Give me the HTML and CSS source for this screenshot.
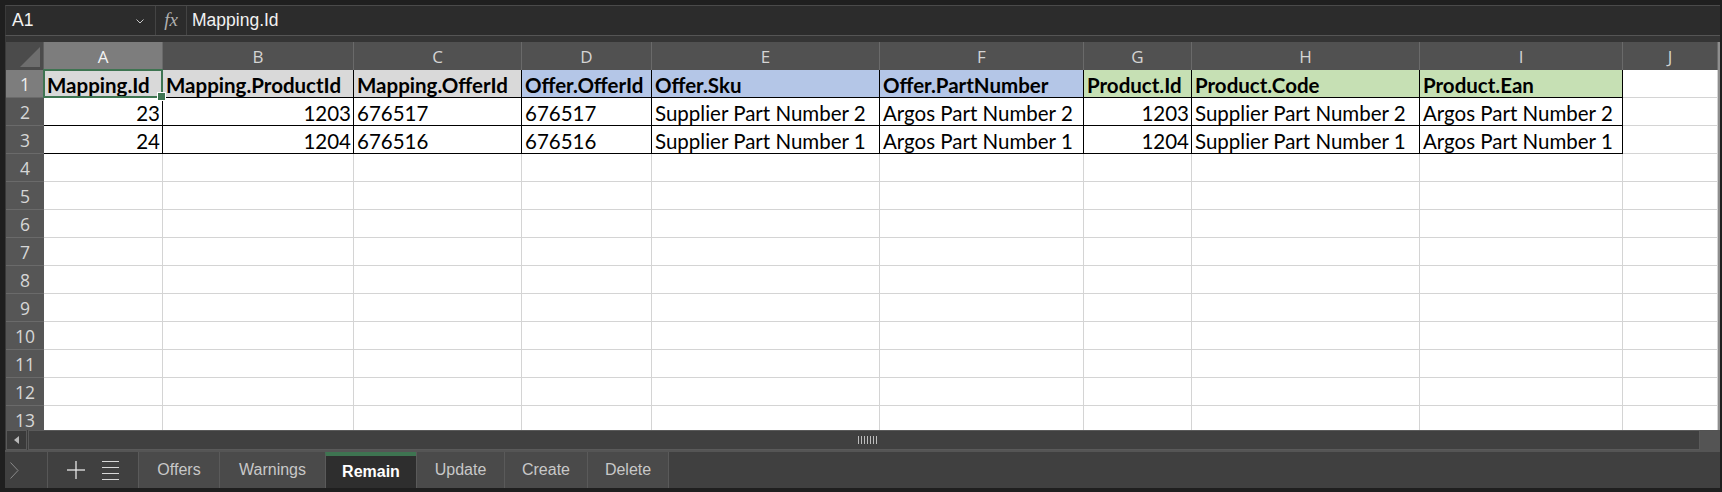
FILE: index.html
```html
<!DOCTYPE html>
<html>
<head>
<meta charset="utf-8">
<link rel="stylesheet" href="styles.css">
</head>
<body>
<div class="app">
  <div class="formula-bar">
    <div class="namebox">
      <span class="name">A1</span>
      <svg class="chev" width="8" height="5" viewBox="0 0 8 5"><polyline points="0.5,0.5 4,4 7.5,0.5" fill="none" stroke="#c8c8c8" stroke-width="1"/></svg>
    </div>
    <div class="fx">fx</div>
    <div class="formula">Mapping.Id</div>
  </div>
  <div class="band"></div>
  <div class="sheet">
    <div class="grid">
      <div class="corner"><div class="tri"></div></div>
      <div class="ch sel">A</div><div class="ch">B</div><div class="ch">C</div><div class="ch">D</div><div class="ch">E</div><div class="ch">F</div><div class="ch">G</div><div class="ch">H</div><div class="ch">I</div><div class="ch">J</div>

      <div class="rh sel">1</div>
      <div class="c k bold gray active">Mapping.Id</div>
      <div class="c k bold gray">Mapping.ProductId</div>
      <div class="c k bold gray">Mapping.OfferId</div>
      <div class="c k bold blue">Offer.OfferId</div>
      <div class="c k bold blue">Offer.Sku</div>
      <div class="c k bold blue">Offer.PartNumber</div>
      <div class="c k bold green">Product.Id</div>
      <div class="c k bold green">Product.Code</div>
      <div class="c k bold green">Product.Ean</div>
      <div class="c"></div>

      <div class="rh">2</div>
      <div class="c k r">23</div>
      <div class="c k r">1203</div>
      <div class="c k">676517</div>
      <div class="c k">676517</div>
      <div class="c k">Supplier Part Number 2</div>
      <div class="c k">Argos Part Number 2</div>
      <div class="c k r">1203</div>
      <div class="c k">Supplier Part Number 2</div>
      <div class="c k">Argos Part Number 2</div>
      <div class="c"></div>

      <div class="rh">3</div>
      <div class="c k r">24</div>
      <div class="c k r">1204</div>
      <div class="c k">676516</div>
      <div class="c k">676516</div>
      <div class="c k">Supplier Part Number 1</div>
      <div class="c k">Argos Part Number 1</div>
      <div class="c k r">1204</div>
      <div class="c k">Supplier Part Number 1</div>
      <div class="c k">Argos Part Number 1</div>
      <div class="c"></div>

      <div class="rh">4</div><div class="c"></div><div class="c"></div><div class="c"></div><div class="c"></div><div class="c"></div><div class="c"></div><div class="c"></div><div class="c"></div><div class="c"></div><div class="c"></div>
      <div class="rh">5</div><div class="c"></div><div class="c"></div><div class="c"></div><div class="c"></div><div class="c"></div><div class="c"></div><div class="c"></div><div class="c"></div><div class="c"></div><div class="c"></div>
      <div class="rh">6</div><div class="c"></div><div class="c"></div><div class="c"></div><div class="c"></div><div class="c"></div><div class="c"></div><div class="c"></div><div class="c"></div><div class="c"></div><div class="c"></div>
      <div class="rh">7</div><div class="c"></div><div class="c"></div><div class="c"></div><div class="c"></div><div class="c"></div><div class="c"></div><div class="c"></div><div class="c"></div><div class="c"></div><div class="c"></div>
      <div class="rh">8</div><div class="c"></div><div class="c"></div><div class="c"></div><div class="c"></div><div class="c"></div><div class="c"></div><div class="c"></div><div class="c"></div><div class="c"></div><div class="c"></div>
      <div class="rh">9</div><div class="c"></div><div class="c"></div><div class="c"></div><div class="c"></div><div class="c"></div><div class="c"></div><div class="c"></div><div class="c"></div><div class="c"></div><div class="c"></div>
      <div class="rh">10</div><div class="c"></div><div class="c"></div><div class="c"></div><div class="c"></div><div class="c"></div><div class="c"></div><div class="c"></div><div class="c"></div><div class="c"></div><div class="c"></div>
      <div class="rh">11</div><div class="c"></div><div class="c"></div><div class="c"></div><div class="c"></div><div class="c"></div><div class="c"></div><div class="c"></div><div class="c"></div><div class="c"></div><div class="c"></div>
      <div class="rh">12</div><div class="c"></div><div class="c"></div><div class="c"></div><div class="c"></div><div class="c"></div><div class="c"></div><div class="c"></div><div class="c"></div><div class="c"></div><div class="c"></div>
      <div class="rh">13</div><div class="c"></div><div class="c"></div><div class="c"></div><div class="c"></div><div class="c"></div><div class="c"></div><div class="c"></div><div class="c"></div><div class="c"></div><div class="c"></div>
    </div>
  </div>
  <div class="hscroll">
    <div class="sbtn"><svg width="5" height="8" viewBox="0 0 5 8"><polygon points="5,0 5,8 0,4" fill="#b8b8b8"/></svg></div>
    <div class="track">
      <div class="grip"><i></i><i></i><i></i><i></i><i></i><i></i><i></i></div>
    </div>
    <div class="corner2"></div>
  </div>
  <div class="tabbar">
    <div class="nav">
      <svg width="9" height="17" viewBox="0 0 9 17"><polyline points="0.5,0.5 8,8.5 0.5,16.5" fill="none" stroke="#8a8a8a" stroke-width="1"/></svg>
    </div>
    <div class="tools">
      <svg width="18" height="18" viewBox="0 0 18 18"><line x1="9" y1="0" x2="9" y2="18" stroke="#e6e6e6" stroke-width="1.3"/><line x1="0" y1="9" x2="18" y2="9" stroke="#e6e6e6" stroke-width="1.3"/></svg>
      <svg width="17" height="19" viewBox="0 0 17 19"><line x1="0" y1="0.5" x2="17" y2="0.5" stroke="#d8d8d8"/><line x1="0" y1="6.5" x2="17" y2="6.5" stroke="#d8d8d8"/><line x1="0" y1="12.5" x2="17" y2="12.5" stroke="#d8d8d8"/><line x1="0" y1="18.5" x2="17" y2="18.5" stroke="#d8d8d8"/></svg>
    </div>
    <div class="tab w-offers">Offers</div>
    <div class="tab w-warnings">Warnings</div>
    <div class="tab active w-remain">Remain</div>
    <div class="tab w-update">Update</div>
    <div class="tab w-create">Create</div>
    <div class="tab w-delete">Delete</div>
  </div>
</div>
</body>
</html>
```

FILE: styles.css
```css
* { box-sizing: border-box; }
html, body { margin: 0; padding: 0; background: #1f1f1f; }
.app {
  width: 1722px;
  height: 492px;
  background: #1f1f1f;
  padding: 5px 2px 4px 5px;
  display: flex;
  flex-direction: column;
  overflow: hidden;
}
.formula-bar {
  height: 31px;
  flex: none;
  display: flex;
  background: #2c2c2c;
  border-top: 1px solid #4a4a4a;
  border-left: 1px solid #3a3a3a;
  border-bottom: 1px solid #555;
  font-family: "Liberation Sans", Arial, sans-serif;
  color: #f2f2f2;
}
.namebox {
  width: 150px;
  display: flex;
  align-items: center;
  justify-content: space-between;
  padding: 0 11px 0 6px;
  border-right: 1px solid #444;
}
.name { font-size: 17.5px; }
.chev { margin-top: 2px; }
.fx {
  width: 31px;
  border-right: 1px solid #444;
  font-family: "Liberation Serif", "Times New Roman", serif;
  font-style: italic;
  font-size: 19px;
  color: #b0b0b0;
  display: flex;
  align-items: center;
  justify-content: center;
  padding-bottom: 2px;
}
.formula {
  flex: 1;
  font-size: 17.5px;
  display: flex;
  align-items: center;
  padding-left: 5px;
}
.band {
  height: 6px;
  flex: none;
  background: #353535;
  border-left: 1px solid #3a3a3a;
}
.sheet {
  height: 388px;
  flex: none;
  overflow: hidden;
  border-left: 1px solid #3a3a3a;
  border-right: 2px solid #8e8e8e;
}
.grid {
  display: grid;
  grid-template-columns: 38px 119px 191px 168px 130px 228px 204px 108px 228px 203px 95px;
  grid-auto-rows: 28px;
}
.corner {
  background: #4b4b4b;
  border-right: 1px solid #5e5e5e;
  position: relative;
}
.tri {
  position: absolute;
  right: 3px;
  bottom: 3px;
  width: 0;
  height: 0;
  border-left: 20px solid transparent;
  border-bottom: 20px solid #6e6e6e;
}
.ch {
  background: #515151;
  border-right: 1px solid #6a6a6a;
  color: #d4d4d4;
  font-family: "Open Sans", sans-serif;
  font-size: 17px;
  display: flex;
  align-items: center;
  justify-content: center;
}
.ch.sel { background: #7d7d7d; color: #f4f4f4; }
.rh {
  background: #565656;
  border-bottom: 1px solid #6a6a6a;
  color: #d6d6d6;
  font-family: "Open Sans", sans-serif;
  font-size: 17.5px;
  display: flex;
  align-items: center;
  justify-content: center;
}
.rh.sel { background: #7d7d7d; color: #efefef; }
.c {
  background: #fff;
  border-right: 1px solid #d4d4d4;
  border-bottom: 1px solid #d4d4d4;
  font-family: Lato, "Liberation Sans", sans-serif;
  font-size: 20.5px;
  line-height: 24px;
  color: #000;
  display: flex;
  align-items: flex-end;
  padding: 0 2px 0 3px;
  white-space: nowrap;
  overflow: visible;
  position: relative;
}
.c.k { border-right-color: #000; border-bottom-color: #000; }
.c.r { justify-content: flex-end; }
.c.bold { font-weight: 700; }
.c.gray { background: #d9d9d9; }
.c.blue { background: #b4c6e7; }
.c.green { background: #c6e0b4; }
.c.active::after {
  content: "";
  position: absolute;
  left: -1px;
  top: -1px;
  right: -1px;
  bottom: -1px;
  border: 2px solid #3e7451;
}
.c.active::before {
  content: "";
  position: absolute;
  right: -4px;
  bottom: -4px;
  width: 7px;
  height: 7px;
  background: #3e7451;
  border: 1px solid #fff;
  z-index: 2;
}
.hscroll {
  height: 20px;
  flex: none;
  display: flex;
  background: #3c3c3c;
  border-left: 1px solid #3a3a3a;
}
.sbtn {
  width: 21px;
  border: 1px solid #5a5a5a;
  background: #3a3a3a;
  display: flex;
  align-items: center;
  justify-content: center;
  margin-right: 1px;
}
.track {
  flex: 1;
  background: #404040;
  border: 1px solid #5a5a5a;
  display: flex;
  align-items: center;
  padding-left: 829px;
}
.grip { display: flex; gap: 2px; height: 8px; }
.grip i { width: 1px; height: 8px; background: #bdbdbd; display: block; }
.corner2 {
  width: 20px;
  background: #545454;
}
.tabbar {
  height: 38px;
  flex: none;
  display: flex;
  background: #404040;
  border-top: 2px solid #555;
  font-family: "Liberation Sans", Arial, sans-serif;
  font-size: 16px;
}
.nav {
  width: 43px;
  border-right: 1px solid #575757;
  display: flex;
  align-items: center;
  padding-left: 5px;
}
.tools {
  width: 90px;
  display: flex;
  align-items: center;
  padding-left: 19px;
  gap: 17px;
}
.tab {
  background: #4a4a4a;
  color: #c8c8c8;
  border-left: 1px solid #5a5a5a;
  display: flex;
  align-items: center;
  justify-content: center;
}
.tab.w-delete { border-right: 1px solid #5a5a5a; }
.tab.active {
  background: #2e2e2e;
  color: #fff;
  font-weight: 700;
  border-top: 4px solid #3e7451;
  padding-bottom: 0;
}
.w-offers { width: 81px; }
.w-warnings { width: 106px; }
.w-remain { width: 91px; }
.w-update { width: 88px; }
.w-create { width: 83px; }
.w-delete { width: 82px; }
```
